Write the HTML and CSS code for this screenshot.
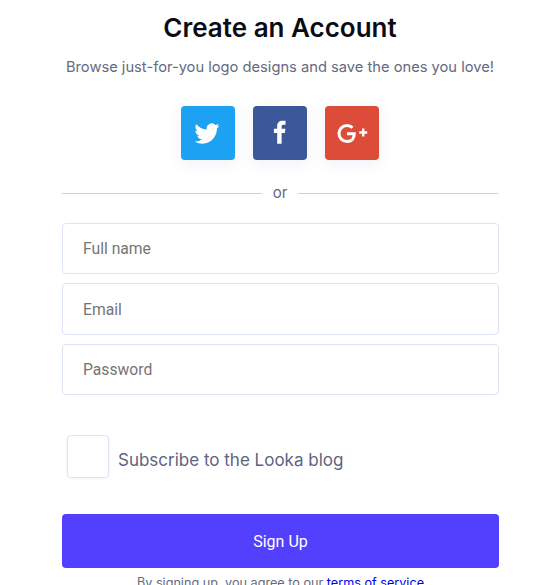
FILE: index.html
```html
<!DOCTYPE html>
<html lang="en">
<head>
<meta charset="utf-8">
<title>Create an Account</title>
<link rel="stylesheet" href="styles.css">
</head>
<body>
<main class="panel">
  <h1 class="title">Create an Account</h1>
  <p class="lead">Browse just-for-you logo designs and save the ones you love!</p>
  <div class="socials">
    <a class="social twitter" href="#" aria-label="Twitter">
      <svg viewBox="0.5 0 24 24" width="25" height="25"><path fill="#fff" d="M23.95 4.57a10 10 0 0 1-2.82.77 4.96 4.96 0 0 0 2.16-2.72c-.95.55-2 .95-3.12 1.18a4.92 4.92 0 0 0-8.38 4.48C7.69 8.1 4.07 6.13 1.64 3.16a4.82 4.82 0 0 0-.67 2.48c0 1.71.87 3.21 2.19 4.1a4.9 4.9 0 0 1-2.23-.62v.06a4.92 4.92 0 0 0 3.95 4.83 5 5 0 0 1-2.21.08 4.94 4.94 0 0 0 4.6 3.42A9.87 9.87 0 0 1 0 19.54a14 14 0 0 0 7.56 2.21c9.05 0 14-7.5 14-13.98 0-.21 0-.42-.02-.63a9.94 9.94 0 0 0 2.41-2.57z"/></svg>
    </a>
    <a class="social facebook" href="#" aria-label="Facebook">
      <svg viewBox="0 1 24 24" width="26" height="26"><path fill="#fff" d="M9.4 23V13H6.4V9H9.4V6.4C9.4 3.4 11.3 1.6 14.2 1.6c1.3 0 2.5.1 2.9.2v3.5h-1.9c-1.4 0-1.7.7-1.7 1.7V9h3.5l-.5 4h-3v10z"/></svg>
    </a>
    <a class="social google" href="#" aria-label="Google Plus">
      <svg viewBox="0 -0.5 32 24" width="32" height="24"><path fill="none" stroke="#fff" stroke-width="3" d="M16.5 6.2A7.4 7.4 0 0 0 11 4a8 8 0 1 0 0 16c4.6 0 7.3-3 7.3-7.7H11"/><path fill="#fff" d="M26 7h2.4v2.8h2.8v2.4h-2.8V15H26v-2.8h-2.8V9.8H26z"/></svg>
    </a>
  </div>
  <div class="divider"><span class="divider-text">or</span></div>
  <form class="form">
    <input class="field" type="text" placeholder="Full name">
    <input class="field" type="email" placeholder="Email">
    <input class="field" type="password" placeholder="Password">
    <label class="check">
      <span class="box"></span>
      <span class="check-text">Subscribe to the Looka blog</span>
    </label>
    <button class="submit" type="button">Sign Up</button>
    <p class="terms">By signing up, you agree to our <a href="#">terms of service</a></p>
  </form>
</main>
</body>
</html>
```
FILE: styles.css
```css
html, body {
  margin: 0;
  height: 585px;
  overflow: hidden;
  background: #fff;
}
body {
  font-family: Inter, "Liberation Sans", sans-serif;
}
.panel {
  width: 437px;
  margin-left: 62px;
  display: flex;
  flex-direction: column;
}
.title {
  margin: 12px 0 0;
  font-size: 26px;
  line-height: 32px;
  font-weight: 600;
  color: #0b0b14;
  text-align: center;
  padding-right: 1px;
}
.lead {
  margin: 12px 0 0;
  font-size: 14.7px;
  line-height: 22px;
  color: #656a80;
  text-align: center;
  white-space: nowrap;
  padding-right: 1px;
}
.socials {
  display: flex;
  justify-content: center;
  gap: 18px;
  margin-top: 28px;
  padding-right: 2px;
}
.social {
  width: 54px;
  height: 54px;
  border-radius: 4px;
  display: flex;
  align-items: center;
  justify-content: center;
  box-shadow: 0 4px 16px rgba(80, 90, 160, 0.08);
}
.twitter { background: #1da1f2; }
.facebook { background: #3b5998; }
.google { background: #dd4b39; }
.divider {
  display: flex;
  align-items: center;
  margin-top: 23px;
  height: 20px;
  padding-right: 1px;
}
.divider::before,
.divider::after {
  content: "";
  flex: 1;
  height: 1px;
  background: #cfd2d8;
}
.divider-text {
  padding: 0 11px 2px;
  font-size: 15px;
  color: #656a80;
}
.form {
  display: flex;
  flex-direction: column;
  margin-top: 20px;
}
.field {
  box-sizing: border-box;
  width: 437px;
  height: 51.4px;
  margin-bottom: 9px;
  padding: 0 20px;
  border: 1px solid #dbe3f4;
  border-radius: 4px;
  font-family: Roboto, sans-serif;
  font-size: 15.7px;
  color: #333;
  outline: none;
}
.field::placeholder { color: #757575; opacity: 1; }
.check {
  display: flex;
  align-items: center;
  gap: 9px;
  margin: 30.8px 0 0 5px;
}
.box {
  box-sizing: border-box;
  width: 42px;
  height: 43px;
  border: 1px solid #dbe3f4;
  border-radius: 4px;
  box-shadow: 0 1px 3px rgba(80, 90, 160, 0.08);
}
.check-text {
  padding-top: 8px;
  font-size: 17px;
  color: #5e6380;
}
.submit {
  margin-top: 36px;
  height: 54px;
  padding-top: 3px;
  border: 0;
  border-radius: 4px;
  background: #5340ff;
  color: #fff;
  font-family: Roboto, sans-serif;
  font-size: 16px;
  font-weight: 400;
}
.terms {
  margin: 7px 0 0;
  font-size: 12.65px;
  line-height: 16px;
  color: #656a80;
  text-align: center;
  white-space: nowrap;
}
.terms a { color: #0000ee; text-decoration: none; }
```
